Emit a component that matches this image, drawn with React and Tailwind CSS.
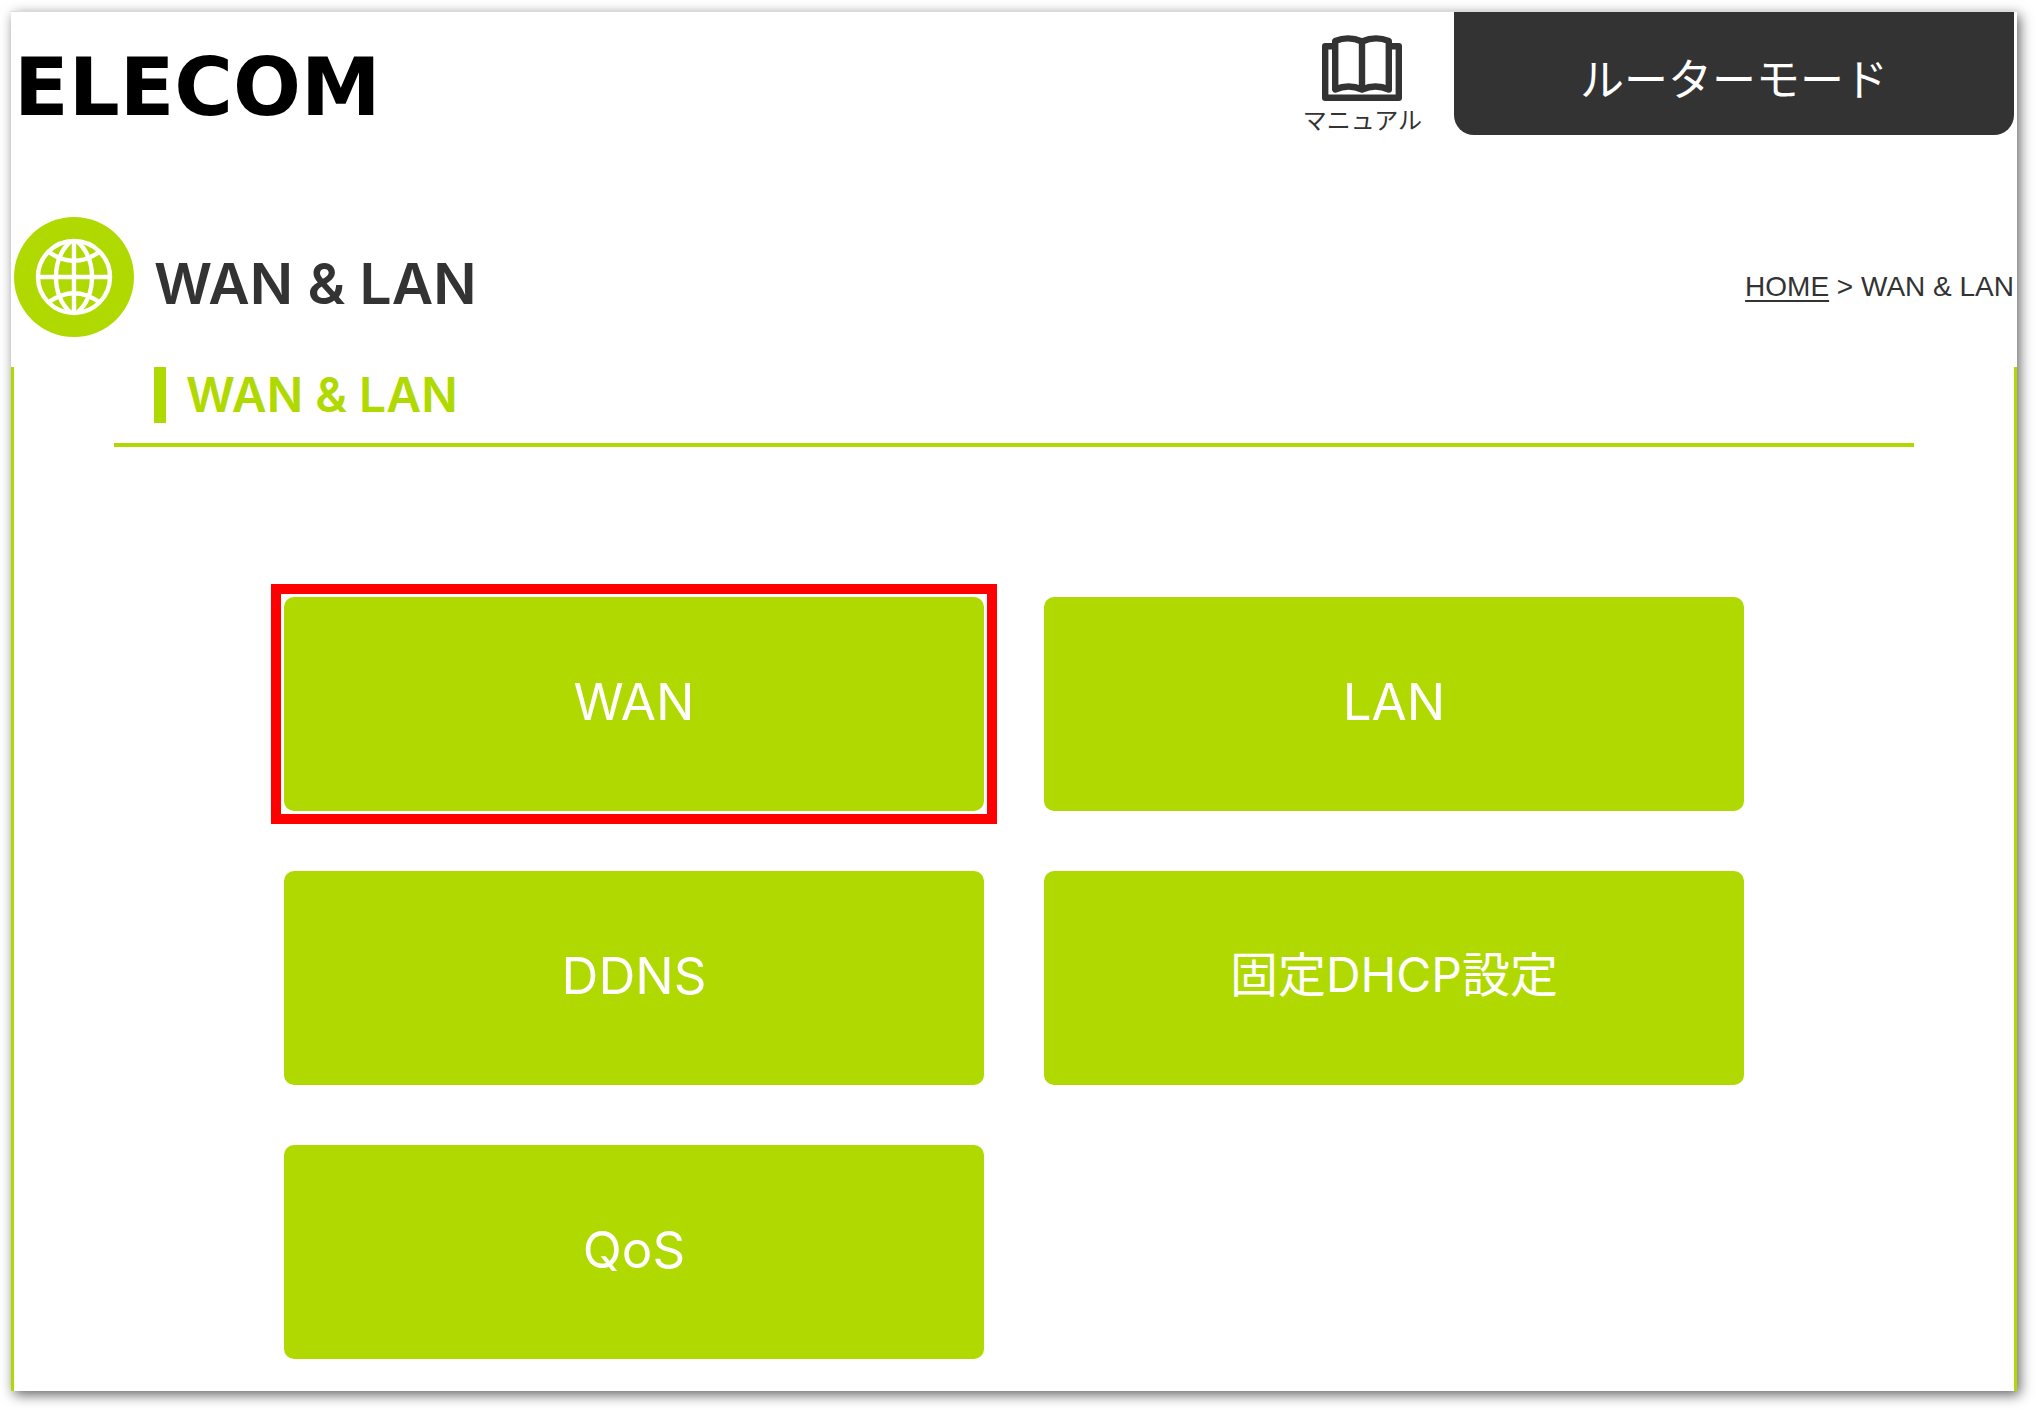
const menus = [
  { label: 'WAN', selected: true },
  { label: 'LAN' },
  { label: 'DDNS' },
  { label: '固定DHCP設定', small: true },
  { label: 'QoS' },
];

function BookIcon() {
  return (
    <svg width="80" height="66" viewBox="0 0 80 66" fill="none" stroke="currentColor" strokeWidth="6.4" strokeLinejoin="round" strokeLinecap="round" aria-hidden="true">
      <path d="M11 11.2H3.2V62.8H76.8V11.2H69" />
      <path d="M13.2 6Q26.5 0.5 40 6.5Q53.5 0.5 66.8 6V54.5Q53.5 48.5 40 54.5Q26.5 48.5 13.2 54.5Z" />
      <path d="M40 7V54" />
    </svg>
  );
}

function GlobeIcon() {
  return (
    <svg width="120" height="120" viewBox="0 0 120 120" fill="none" stroke="#fff" strokeWidth="4.4" className="shrink-0" aria-hidden="true">
      <circle cx="60" cy="60" r="60" fill="#afd900" stroke="none" />
      <circle cx="60" cy="60" r="36" />
      <path d="M60 24V96M24 60H96" />
      <path d="M57 24C37 42 37 78 57 96M63 24C83 42 83 78 63 96" />
      <path d="M34 34.5Q60 53 86 34.5M34 85.5Q60 67 86 85.5" />
    </svg>
  );
}

export default function App() {
  return (
    <div className="pt-[11px] pl-[11px] pr-[19px] pb-[19px] bg-white text-[#333] font-['Inter','Noto_Sans_CJK_JP',sans-serif]">
      <div className="bg-white border-t border-[#dcdcdc] shadow-[3px_4px_12px_rgba(0,0,0,0.6)]">
        {/* Header */}
        <header className="flex items-start px-[3px]">
          <div className="pt-9 mr-auto text-[80px] leading-[80px] font-bold text-black font-['DejaVu_Sans',sans-serif]">ELECOM</div>
          <a href="#manual" className="flex flex-col items-center pt-[23px] mr-8">
            <BookIcon />
            <span className="pt-1.5 text-[24px] leading-7">マニュアル</span>
          </a>
          <div className="w-[28%] h-[123px] pt-3 flex items-center justify-center rounded-b-[20px] bg-[#333] text-white text-[44px] leading-none">
            ルーターモード
          </div>
        </header>

        {/* Page title */}
        <div className="flex items-center mt-[82px] px-[3px]">
          <GlobeIcon />
          <h1 className="pt-3 ml-5 text-[57px] leading-none font-semibold">WAN & LAN</h1>
          <nav className="pt-5 ml-auto text-[28px] leading-none font-['Liberation_Sans',sans-serif]">
            <a href="#home" className="underline underline-offset-4 decoration-2">HOME</a> &gt; WAN & LAN
          </nav>
        </div>

        <main className="mt-[30px] pb-8 border-x-3 border-[#afd900]">
          <div className="mx-[5%] pl-10 pb-5 border-b-4 border-[#afd900]">
            <h2 className="pl-5 border-l-12 border-[#afd900] text-[48px] leading-[56px] font-semibold text-[#afd900]">WAN & LAN</h2>
          </div>

          <div className="w-[73%] mx-auto mt-[150px] grid grid-cols-2 gap-[60px]">
            {menus.map((menu) => (
              <button
                key={menu.label}
                type="button"
                className={`relative h-[214px] pb-1.5 rounded-[10px] bg-[#afd900] text-white leading-none cursor-pointer ${menu.small ? 'text-[48px]' : 'text-[51px]'}`}
              >
                {menu.label}
                {menu.selected && <span className="absolute -inset-[13px] border-10 border-[#ff0000]"></span>}
              </button>
            ))}
          </div>
        </main>
      </div>
    </div>
  );
}
